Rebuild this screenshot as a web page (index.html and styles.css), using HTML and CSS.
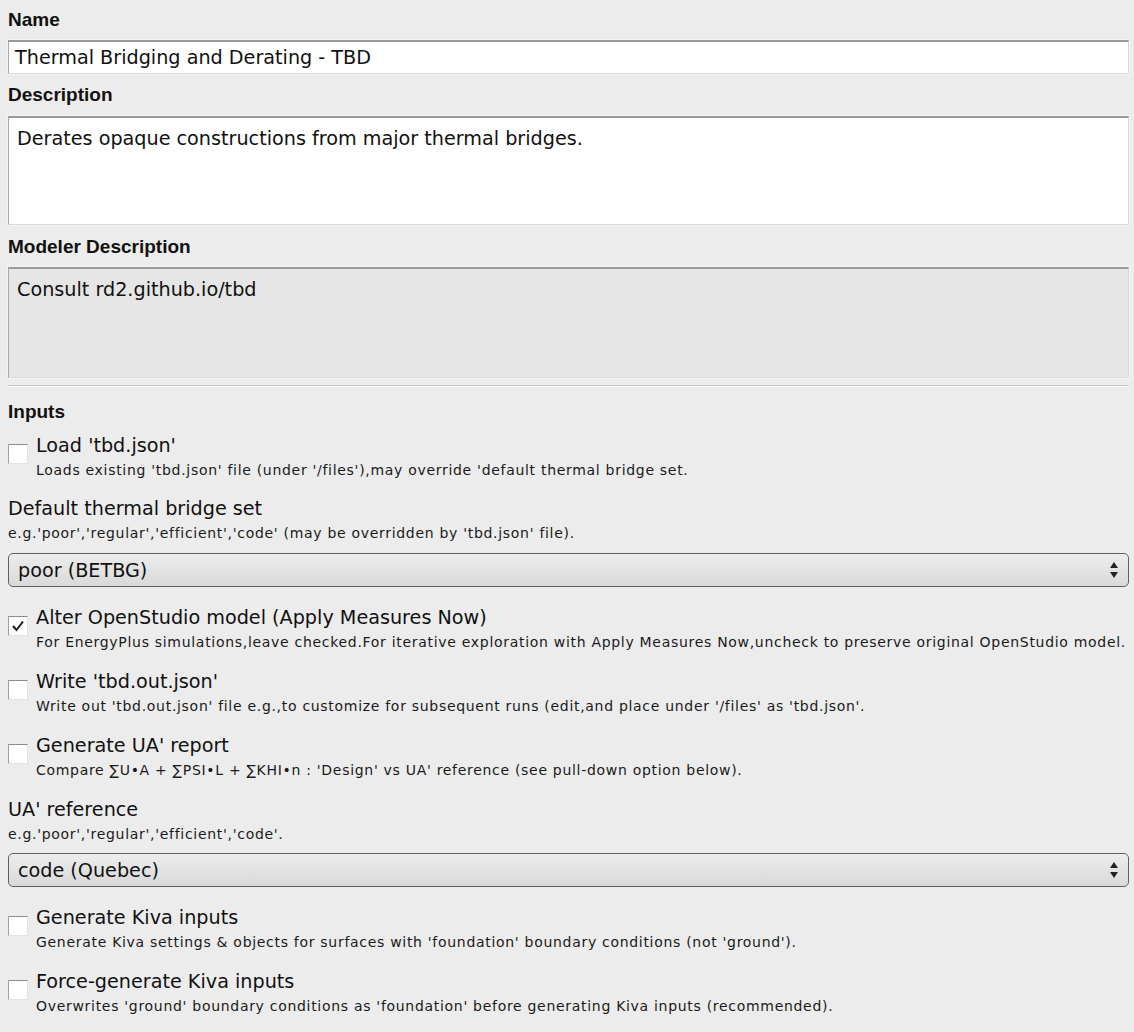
FILE: index.html
```html
<!DOCTYPE html>
<html>
<head>
<meta charset="utf-8">
<link rel="stylesheet" href="styles.css">
</head>
<body>
<div class="page">
  <div class="flabel">Name</div>
  <div class="tbox single">Thermal Bridging and Derating - TBD</div>

  <div class="flabel l-desc">Description</div>
  <div class="tbox multi">Derates opaque constructions from major thermal bridges.</div>

  <div class="flabel l-mod">Modeler Description</div>
  <div class="tbox multi disabled">Consult rd2.github.io/tbd</div>

  <div class="sep"></div>

  <div class="flabel l-inputs">Inputs</div>

  <div class="check first">
    <span class="cbox"></span>
    <div class="ctext">
      <div class="ilabel">Load 'tbd.json'</div>
      <div class="idesc">Loads existing 'tbd.json' file (under '/files'),may override 'default thermal bridge set.</div>
    </div>
  </div>

  <div class="choice">
    <div class="ilabel">Default thermal bridge set</div>
    <div class="idesc">e.g.'poor','regular','efficient','code' (may be overridden by 'tbd.json' file).</div>
    <div class="select">
      <span>poor (BETBG)</span>
      <svg class="arrows" width="10" height="20" viewBox="0 0 10 20"><path d="M5 2 L9 8 L1 8 Z" fill="#222"/><path d="M1 12 L9 12 L5 18 Z" fill="#222"/></svg>
    </div>
  </div>

  <div class="check after-select">
    <span class="cbox"><svg width="18" height="18" viewBox="0 0 18 18"><path d="M4 9 L7.5 13 L14 4.5" fill="none" stroke="#1a1a1a" stroke-width="2"/></svg></span>
    <div class="ctext">
      <div class="ilabel">Alter OpenStudio model (Apply Measures Now)</div>
      <div class="idesc">For EnergyPlus simulations,leave checked.For iterative exploration with Apply Measures Now,uncheck to preserve original OpenStudio model.</div>
    </div>
  </div>

  <div class="check">
    <span class="cbox"></span>
    <div class="ctext">
      <div class="ilabel">Write 'tbd.out.json'</div>
      <div class="idesc">Write out 'tbd.out.json' file e.g.,to customize for subsequent runs (edit,and place under '/files' as 'tbd.json'.</div>
    </div>
  </div>

  <div class="check">
    <span class="cbox"></span>
    <div class="ctext">
      <div class="ilabel">Generate UA' report</div>
      <div class="idesc">Compare ∑U•A + ∑PSI•L + ∑KHI•n : 'Design' vs UA' reference (see pull-down option below).</div>
    </div>
  </div>

  <div class="choice c2">
    <div class="ilabel">UA' reference</div>
    <div class="idesc">e.g.'poor','regular','efficient','code'.</div>
    <div class="select">
      <span>code (Quebec)</span>
      <svg class="arrows" width="10" height="20" viewBox="0 0 10 20"><path d="M5 2 L9 8 L1 8 Z" fill="#222"/><path d="M1 12 L9 12 L5 18 Z" fill="#222"/></svg>
    </div>
  </div>

  <div class="check after-select">
    <span class="cbox"></span>
    <div class="ctext">
      <div class="ilabel">Generate Kiva inputs</div>
      <div class="idesc">Generate Kiva settings &amp; objects for surfaces with 'foundation' boundary conditions (not 'ground').</div>
    </div>
  </div>

  <div class="check">
    <span class="cbox"></span>
    <div class="ctext">
      <div class="ilabel">Force-generate Kiva inputs</div>
      <div class="idesc">Overwrites 'ground' boundary conditions as 'foundation' before generating Kiva inputs (recommended).</div>
    </div>
  </div>
</div>
</body>
</html>
```

FILE: styles.css
```css
html, body {
  margin: 0;
  padding: 0;
  background: #ececec;
}
body {
  color: #111;
  font-family: "DejaVu Sans", "Liberation Sans", sans-serif;
}
.page {
  padding: 8px 5px 0 8px;
  display: flex;
  flex-direction: column;
}
.flabel {
  font-family: "Liberation Sans", Arial, sans-serif;
  font-weight: bold;
  font-size: 19px;
  line-height: 24px;
  height: 24px;
}
.l-desc { margin-top: 9px; }
.l-mod { margin-top: 10px; }
.l-inputs { margin-top: 13px; }

.tbox {
  box-sizing: border-box;
  background: #fff;
  border-top: 2px solid #9b9b9b;
  border-left: 1px solid #a8a8a8;
  border-right: 1px solid #d6d6d6;
  border-bottom: 1px solid #dadada;
  box-shadow: 0 0 0 1px #f4f4f4;
  font-size: 19.2px;
  line-height: 24px;
  color: #111;
}
.single {
  margin-top: 8px;
  height: 34px;
  padding: 4px 6px 0 6px;
}
.multi {
  margin-top: 9px;
  height: 109px;
  padding: 9px 8px 0 8px;
}
.disabled {
  margin-top: 8px;
  height: 111px;
  background: #e6e6e6;
  padding-top: 9px;
}
.sep {
  margin-top: 7px;
  height: 0;
  border-top: 1px solid #c6c6c6;
  border-bottom: 1px solid #fbfbfb;
}

.ilabel {
  font-size: 19.2px;
  line-height: 25px;
  height: 25px;
  color: #111;
}
.idesc {
  font-size: 14px;
  line-height: 25px;
  height: 25px;
  color: #1a1a1a;
  letter-spacing: 0.7px;
  white-space: nowrap;
}
.check {
  display: flex;
  gap: 8px;
  margin-top: 14px;
}
.check.first { margin-top: 9px; }
.check.after-select { margin-top: 18px; }
.cbox {
  flex: none;
  box-sizing: border-box;
  width: 20px;
  height: 20px;
  margin-top: 11px;
  background: #fff;
  border-top: 1px solid #8c8c8c;
  border-left: 1px solid #a0a0a0;
  border-right: 1px solid #e2e2e2;
  border-bottom: 1px solid #e2e2e2;
  display: flex;
  align-items: center;
  justify-content: center;
}
.cbox svg { display: block; }
.ctext {
  display: flex;
  flex-direction: column;
}
.choice {
  margin-top: 13px;
  display: flex;
  flex-direction: column;
}
.c2 { margin-top: 14px; }
.select {
  margin-top: 7px;
  box-sizing: border-box;
  height: 34px;
  border: 1px solid #5f5f5f;
  border-radius: 5px;
  background: linear-gradient(#ededed, #d9d9d9);
  display: flex;
  align-items: center;
  justify-content: space-between;
  padding: 0 9px 0 9px;
  font-size: 19.2px;
  color: #111;
}
.c2 .select { margin-top: 6px; }
.arrows { display: block; }
```
